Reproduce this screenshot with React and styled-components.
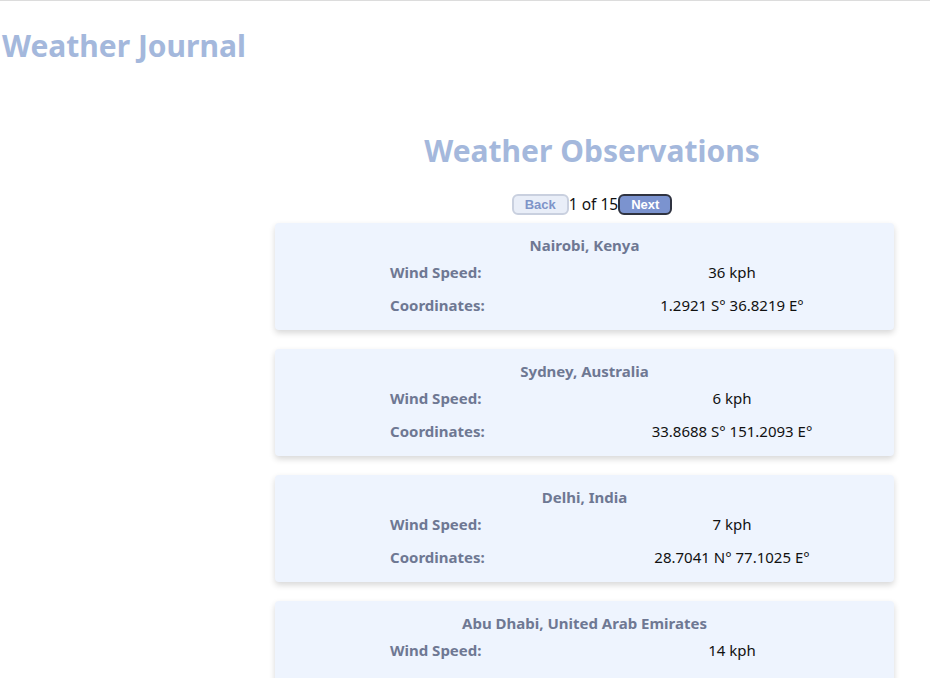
import styled, { createGlobalStyle } from 'styled-components';

const observations = [
  { city: 'Nairobi, Kenya', wind: '36 kph', coords: '1.2921 S° 36.8219 E°' },
  { city: 'Sydney, Australia', wind: '6 kph', coords: '33.8688 S° 151.2093 E°' },
  { city: 'Delhi, India', wind: '7 kph', coords: '28.7041 N° 77.1025 E°' },
  { city: 'Abu Dhabi, United Arab Emirates', wind: '14 kph', coords: '24.4539 N° 54.3773 E°' },
];

export default function App() {
  return (
    <>
      <GlobalStyle />
      <Page>
        <Header>Weather Journal</Header>
        <Layout>
          <Aside />
          <Main>
            <Title>Weather Observations</Title>
            <Pager>
              <PageButton>Back</PageButton>
              <span>1 of 15</span>
              <PageButton primary>Next</PageButton>
            </Pager>
            <CardList>
              {observations.map((o) => (
                <Card key={o.city}>
                  <City>{o.city}</City>
                  <Row>
                    <Label>Wind Speed:</Label>
                    <Value>{o.wind}</Value>
                  </Row>
                  <Row>
                    <Label>Coordinates:</Label>
                    <Value>{o.coords}</Value>
                  </Row>
                </Card>
              ))}
            </CardList>
          </Main>
        </Layout>
      </Page>
    </>
  );
}

const GlobalStyle = createGlobalStyle`
  html, body {
    margin: 0;
    background: #fff;
    overflow: hidden;
  }
  body {
    border-top: 1px solid #dcdcdc;
    font-family: 'Noto Sans', 'Lato', sans-serif;
    color: #111;
  }
`;

const Page = styled.div`
  display: flex;
  flex-direction: column;
`;

const Header = styled.h1`
  margin: 27px 0 0 2px;
  font-size: 30px;
  font-weight: bold;
  line-height: 36px;
  color: #a4b8dc;
`;

const Layout = styled.div`
  display: flex;
`;

const Aside = styled.div`
  width: 254px;
  flex-shrink: 0;
`;

const Main = styled.div`
  width: 676px;
  display: flex;
  flex-direction: column;
  align-items: center;
`;

const Title = styled.h2`
  margin: 67px 0 0;
  font-size: 30px;
  line-height: 40px;
  font-weight: bold;
  color: #a4b8dc;
`;

const Pager = styled.div`
  display: flex;
  align-items: center;
  margin-top: 22px;
  font-size: 15.5px;
`;

const PageButton = styled.button`
  font-family: 'Liberation Sans', Arial, sans-serif;
  font-size: 13px;
  font-weight: bold;
  height: 21px;
  padding: 0 11px;
  border-radius: 6px;
  border: 2px solid ${(p) => (p.primary ? '#2f3340' : '#c9d0df')};
  background: ${(p) => (p.primary ? '#7b93cf' : '#e9eef8')};
  color: ${(p) => (p.primary ? '#fff' : '#7e94c8')};
`;

const CardList = styled.div`
  align-self: flex-start;
  margin-left: 21px;
  margin-top: 8px;
  width: 619px;
  display: flex;
  flex-direction: column;
  gap: 19px;
`;

const Card = styled.div`
  background: #eef4fe;
  border-radius: 4px;
  box-shadow: 0 3px 6px rgba(0, 0, 0, 0.16);
  padding: 11px 0 8px;
`;

const City = styled.div`
  text-align: center;
  font-weight: bold;
  font-size: 15px;
  line-height: 22px;
  color: #6e7893;
`;

const Row = styled.div`
  display: grid;
  grid-template-columns: 180px 1fr;
  padding-left: 115px;
  line-height: 33px;
  font-size: 15px;
`;

const Label = styled.span`
  font-weight: bold;
  color: #6e7893;
`;

const Value = styled.span`
  text-align: center;
`;
